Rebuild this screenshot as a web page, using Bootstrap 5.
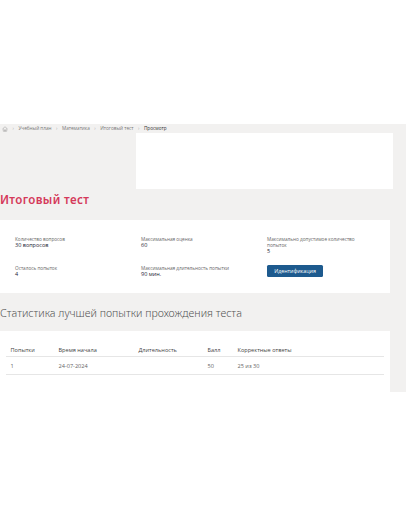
<!DOCTYPE html>
<html lang="ru">
<head>
<meta charset="utf-8">
<title>Итоговый тест</title>
<link href="https://cdn.jsdelivr.net/npm/bootstrap@5.3.0/dist/css/bootstrap.min.css" rel="stylesheet">
<style>
html,body{background:#fff;font-family:"Open Sans","Liberation Sans",sans-serif;color:#444;}
.top-gap{height:124px;}
.stage{background:#f2f1f0;height:268px;padding-right:16px;overflow:hidden;}
.crumbs{height:9px;font-size:4.7px;line-height:9px;color:#777;gap:4.5px;padding-left:2px;}
.crumbs .sep{color:#aaa;}
.crumbs .now{color:#333;}
.banner-row{height:56px;}
.banner{margin:0 -3px 0 136px;height:56px;background:#fff;}
.title-main{font-family:"Noto Sans",sans-serif;font-size:11.6px;font-weight:600;line-height:16px;color:#d5395a;margin:3px 0 0;letter-spacing:.35px;height:28px;}
.info{background:#fff;height:73px;padding:15.5px 0 0 15px;}
.info-col{width:126px;flex:none;font-size:4.7px;line-height:6px;color:#666;}
.info-col.wide{width:100px;}
.info-val{color:#223;font-size:5.5px;line-height:6.5px;}
.cell-a{height:29.5px;}
.go-btn{background:#1d5a8e;color:#fff;font-size:5.3px;line-height:12px;padding:0;width:56px;height:12px;border:0;border-radius:1.5px;display:block;}
.title-sec{font-family:"Noto Sans",sans-serif;font-weight:300;font-size:10.7px;line-height:14px;color:#555;margin:12.5px 0 0;height:25.5px;}
.tbl-card{background:#fff;height:62px;padding:12px 6px 0 5.500px;}
.tbl{width:378px;margin:0;font-size:5.6px;color:#666;table-layout:fixed;--bs-table-bg:transparent;}
.tbl th,.tbl td{padding:1.5px 0 0 5px;border-bottom:1px solid #e6e6e6;font-weight:400;vertical-align:middle;}
.tbl th{height:13px;color:#444;font-weight:500;}
.tbl td{height:18px;}
</style>
</head>
<body>
<div class="top-gap"></div>
<main class="stage">
  <nav class="crumbs d-flex align-items-center" aria-label="breadcrumb">
    <svg width="6" height="6" viewBox="0 0 12 12" fill="none" stroke="#999" stroke-width="1"><path d="M1 6 6 1.500 11 6M2.500 5v5.500h7V5M5 10.500V7.500h2v3"/></svg>
    <span class="sep">›</span><span>Учебный план</span>
    <span class="sep">›</span><span>Математика</span>
    <span class="sep">›</span><span>Итоговый тест</span>
    <span class="sep">›</span><span class="now">Просмотр</span>
  </nav>
  <div class="banner-row"><div class="banner"></div></div>
  <h1 class="title-main">Итоговый тест</h1>
  <section class="info d-flex">
    <div class="info-col">
      <div class="cell-a">Количество вопросов<div class="info-val">30 вопросов</div></div>
      <div>Осталось попыток<div class="info-val">4</div></div>
    </div>
    <div class="info-col">
      <div class="cell-a">Максимальная оценка<div class="info-val">60</div></div>
      <div>Максимальная длительность попытки<div class="info-val">90 мин.</div></div>
    </div>
    <div class="info-col wide">
      <div class="cell-a">Максимально допустимое количество попыток<div class="info-val">5</div></div>
      <button class="btn go-btn" type="button">Идентификация</button>
    </div>
  </section>
  <h2 class="title-sec">Статистика лучшей попытки прохождения теста</h2>
  <section class="tbl-card">
    <table class="table tbl">
      <colgroup><col style="width:48px"><col style="width:80px"><col style="width:69px"><col style="width:30px"><col></colgroup>
      <thead><tr><th>Попытки</th><th>Время начала</th><th>Длительность</th><th>Балл</th><th>Корректные ответы</th></tr></thead>
      <tbody><tr><td>1</td><td>24-07-2024</td><td></td><td>50</td><td>25 из 30</td></tr></tbody>
    </table>
  </section>
</main>
<script src="https://cdn.jsdelivr.net/npm/bootstrap@5.3.0/dist/js/bootstrap.bundle.min.js"></script>
</body>
</html>
